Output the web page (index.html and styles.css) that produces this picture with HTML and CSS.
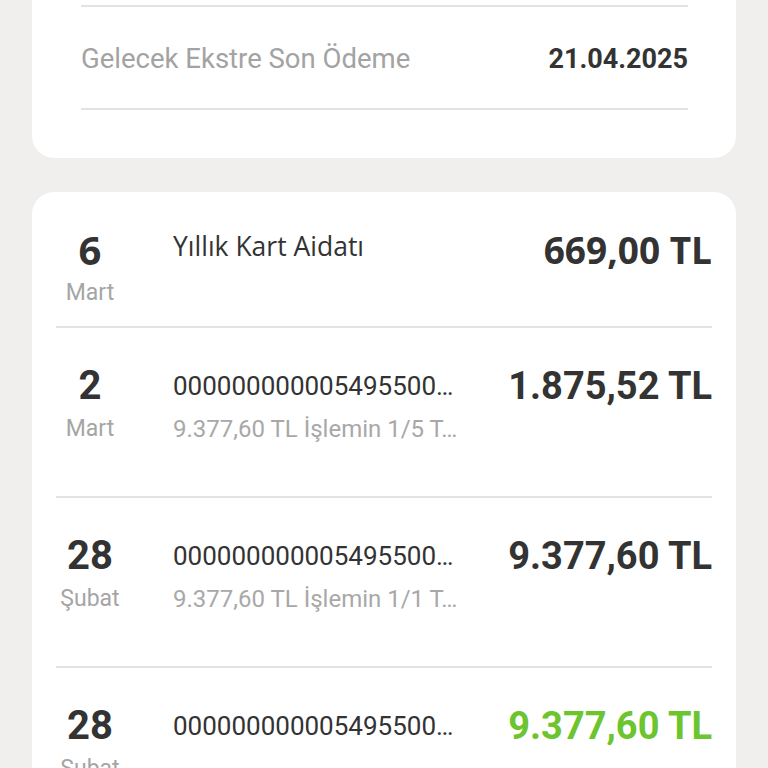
FILE: index.html
```html
<!DOCTYPE html>
<html lang="tr">
<head>
    <meta charset="UTF-8">
    <meta name="viewport" content="width=device-width, initial-scale=1.0">
    <title>Kart Hareketleri</title>
    <link rel="stylesheet" href="styles.css">
</head>
<body>
    <div class="page">
        <div class="card summary">
            <div class="summary-row">
                <span class="summary-label">Gelecek Ekstre Son Ödeme</span>
                <span class="summary-value">21.04.2025</span>
            </div>
        </div>

        <div class="card tx-list">
            <div class="tx alt-font">
                <div class="tx-date">
                    <div class="tx-day">6</div>
                    <div class="tx-month">Mart</div>
                </div>
                <div class="tx-info">
                    <div class="tx-title">Yıllık Kart Aidatı</div>
                </div>
                <div class="tx-amount">669,00 TL</div>
            </div>

            <div class="tx tall">
                <div class="tx-date">
                    <div class="tx-day">2</div>
                    <div class="tx-month">Mart</div>
                </div>
                <div class="tx-info">
                    <div class="tx-title">000000000005495500…</div>
                    <div class="tx-sub">9.377,60 TL İşlemin 1/5 T…</div>
                </div>
                <div class="tx-amount">1.875,52 TL</div>
            </div>

            <div class="tx tall">
                <div class="tx-date">
                    <div class="tx-day">28</div>
                    <div class="tx-month">Şubat</div>
                </div>
                <div class="tx-info">
                    <div class="tx-title">000000000005495500…</div>
                    <div class="tx-sub">9.377,60 TL İşlemin 1/1 T…</div>
                </div>
                <div class="tx-amount">9.377,60 TL</div>
            </div>

            <div class="tx tall">
                <div class="tx-date">
                    <div class="tx-day">28</div>
                    <div class="tx-month">Şubat</div>
                </div>
                <div class="tx-info">
                    <div class="tx-title">000000000005495500…</div>
                </div>
                <div class="tx-amount income">9.377,60 TL</div>
            </div>
        </div>
    </div>
</body>
</html>
```

FILE: styles.css
```css
* {
    box-sizing: border-box;
    margin: 0;
    padding: 0;
}

body {
    font-family: Roboto, 'Noto Sans', sans-serif;
    background-color: #f0efed;
    color: #333333;
    overflow: hidden;
}

.page {
    padding: 0 32px;
}

.card {
    background: #ffffff;
    border-radius: 22px;
}

/* ekstre ozeti */
.summary {
    margin-top: -20px;
    padding: 25px 48px 48px 49px;
}

.summary-row {
    display: flex;
    justify-content: space-between;
    align-items: center;
    padding: 37px 0 34px;
    line-height: 30px;
    border-top: 2px solid #e3e3e3;
    border-bottom: 2px solid #e3e3e3;
}

.summary-label {
    font-size: 27.5px;
    color: #a3a3a3;
}

.summary-value {
    font-size: 27px;
    font-weight: 700;
    color: #333333;
}

/* hareket listesi */
.tx-list {
    margin-top: 34px;
    padding: 0 24px;
}

.tx {
    display: flex;
    align-items: flex-start;
    padding: 36px 0 12px;
    border-bottom: 2px solid #e3e3e3;
}

.tx.tall {
    padding-bottom: 46px;
}

.tx-date {
    width: 68px;
    flex-shrink: 0;
    margin-right: 49px;
    text-align: center;
}

.tx-day {
    font-size: 40px;
    font-weight: 700;
    line-height: 44px;
}

.tx-month {
    font-size: 23px;
    line-height: 42px;
    color: #a5a5a5;
}

.tx-info {
    width: 290px;
    flex-shrink: 0;
}

.tx-title {
    font-size: 26px;
    line-height: 44px;
    white-space: nowrap;
    overflow: hidden;
    text-overflow: ellipsis;
}

.tx-sub {
    font-size: 24px;
    line-height: 42px;
    color: #a8a8a8;
    white-space: nowrap;
    overflow: hidden;
    text-overflow: ellipsis;
}

.tx-amount {
    flex: 1;
    text-align: right;
    font-size: 38px;
    font-weight: 700;
    line-height: 44px;
    white-space: nowrap;
}

.tx-amount.income {
    color: #6cc42e;
}

.alt-font .tx-day,
.alt-font .tx-title,
.alt-font .tx-amount {
    font-family: 'Open Sans', 'Noto Sans', sans-serif;
}

.alt-font .tx-title {
    font-size: 26.5px;
    font-weight: 500;
    line-height: 36px;
}

.alt-font .tx-amount {
    font-size: 37px;
}
```
